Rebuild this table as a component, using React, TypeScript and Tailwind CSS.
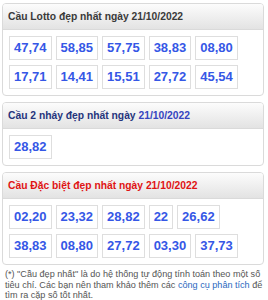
import type { ReactNode } from "react";

const lotto = ["47,74", "58,85", "57,75", "38,83", "08,80", "17,71", "14,41", "15,51", "27,72", "45,54"];
const haiNhay = ["28,82"];
const dacBiet = ["02,20", "23,32", "28,82", "22", "26,62", "38,83", "08,80", "27,72", "03,30", "37,73"];

function Panel({ title, items }: { title: ReactNode; items: string[] }) {
  return (
    <div className="mb-[6px] ml-[2px] mr-[4px] overflow-hidden rounded-[4px] border border-[#dadada] bg-white">
      <div className="flex h-[26px] items-center border-b border-[#dadada] bg-gradient-to-b from-[#fcfcfc] to-[#e3e3e3] px-[5px] text-[10.3px] font-bold">
        {title}
      </div>
      <div className="flex flex-wrap gap-x-[4px] gap-y-[5px] px-[6px] pb-[6px] pt-[6px]">
        {items.map((n, i) => (
          <span
            key={i}
            className="flex h-[24px] items-center border border-[#dedede] bg-white px-[4px] text-[13px] font-bold text-[#3557e6]"
          >
            {n}
          </span>
        ))}
      </div>
    </div>
  );
}

export default function App() {
  return (
    <div className="h-[300px] w-[268px] overflow-hidden bg-white pt-[3px] font-['Liberation_Sans',Arial,sans-serif]">
      <Panel title={<span className="text-[#3a3a3a]">Cầu Lotto đẹp nhất ngày 21/10/2022</span>} items={lotto} />
      <Panel
        title={
          <span className="text-[#26357d]">
            Cầu 2 nháy đẹp nhất ngày <span className="text-[#3545c0]">21/10/2022</span>
          </span>
        }
        items={haiNhay}
      />
      <Panel title={<span className="text-[#e01414]">Cầu Đặc biệt đẹp nhất ngày 21/10/2022</span>} items={dacBiet} />
      {/* footnote */}
      <p className="-mt-[2px] ml-[5px] mr-[4px] text-[9.1px] leading-[10.5px] text-[#555]">
        (*) "Cầu đẹp nhất" là do hệ thống tự động tính toán theo một số tiêu chí. Các bạn nên tham khảo thêm các{" "}
        <a className="text-[#2a68c0]">công cụ phân tích</a> để tìm ra cặp số tốt nhất.
      </p>
    </div>
  );
}
